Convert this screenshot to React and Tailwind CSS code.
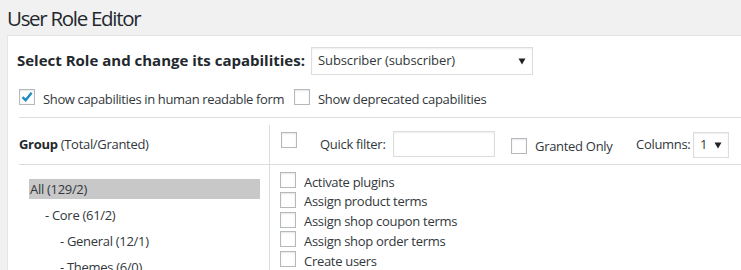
import React from 'react';

const font = { fontFamily: '"Open Sans", "Liberation Sans", sans-serif' };

const Checkbox = ({ checked = false, className = '' }) => (
    <span
        className={`flex h-[16px] w-[16px] shrink-0 items-center justify-center border border-[#b4b9be] bg-white shadow-[inset_0_1px_2px_rgba(0,0,0,0.1)] ${className}`}
    >
        {checked && (
            <svg width="14" height="14" viewBox="0 0 14 14">
                <path d="M2.5 7.2 L5.6 10.2 L11.6 2.8" fill="none" stroke="#1e8cbe" strokeWidth="2.4" />
            </svg>
        )}
    </span>
);

const Arrow = () => (
    <svg width="8" height="7" viewBox="0 0 8 7">
        <path d="M0.5 0.5 H7.5 L4 6.5 Z" fill="#222" />
    </svg>
);

const tree = [
    { label: 'All (129/2)', indent: 'pl-[1px]', active: true },
    { label: '- Core (61/2)', indent: 'pl-[16px]' },
    { label: '- General (12/1)', indent: 'pl-[31px]' },
    { label: '- Themes (6/0)', indent: 'pl-[31px]' },
];

const caps = [
    'Activate plugins',
    'Assign product terms',
    'Assign shop coupon terms',
    'Assign shop order terms',
    'Create users',
];

export default function App() {
    return (
        <div
            className="h-[270px] w-[741px] overflow-hidden bg-[#f1f1f1] text-[13px] tracking-[-0.3px] text-[#32373c]"
            style={font}
        >
            {/* Title */}
            <h1 className="h-[35px] pl-[7px] pt-[5px] text-[20.5px] leading-[27px] tracking-[-1.3px] text-[#23282d]">
                User Role Editor
            </h1>

            {/* Panel */}
            <div className="ml-[7px] h-[235px] border-l border-t border-[#e5e5e5] bg-white">
                {/* Role select row */}
                <div className="flex items-center pl-[9px] pt-[11px]">
                    <span className="mb-[3px] w-[294px] shrink-0 whitespace-nowrap text-[15px] font-bold leading-[20px] tracking-[0px] text-[#23282d]">
                        Select Role and change its capabilities:
                    </span>
                    <div className="flex h-[28px] w-[222px] items-center justify-between border border-[#ddd] bg-white pl-[6px] pr-[6px] shadow-[inset_0_1px_2px_rgba(0,0,0,0.07)]">
                        <span className="tracking-[-0.1px] text-[#32373c]">Subscriber (subscriber)</span>
                        <Arrow />
                    </div>
                </div>

                {/* Options row */}
                <div className="mt-[14px] flex h-[16px] items-center pl-[11px]">
                    <Checkbox checked />
                    <span className="ml-[8px] mt-[3px] w-[251px] shrink-0 whitespace-nowrap leading-[16px] tracking-[-0.35px]">
                        Show capabilities in human readable form
                    </span>
                    <Checkbox />
                    <span className="ml-[8px] mt-[3px] whitespace-nowrap leading-[16px]">Show deprecated capabilities</span>
                </div>

                {/* Editor table */}
                <div className="ml-[11px] mt-[12px] border-t border-[#ddd] pt-[7px]">
                    <div className="flex">
                        {/* Groups */}
                        <div className="h-[200px] w-[251px] shrink-0 border-r border-[#ddd]">
                            <div className="flex h-[40px] items-center border-b border-[#ddd]">
                                <span className="mt-[1px]">
                                    <b className="font-bold text-[#23282d]">Group</b> (Total/Granted)
                                </span>
                            </div>
                            <ul className="flex flex-col gap-[6px] pl-[10px] pr-[9px] pt-[14px]">
                                {tree.map((t) => (
                                    <li
                                        key={t.label}
                                        className={`h-[20px] leading-[20px] ${t.indent} ${t.active ? 'bg-[#c8c8c8]' : ''}`}
                                    >
                                        {t.label}
                                    </li>
                                ))}
                            </ul>
                        </div>

                        {/* Capabilities */}
                        <div className="flex-1">
                            <div className="flex h-[40px] border-b border-[#ddd] pl-[11px]">
                                <Checkbox className="mt-[7px]" />
                                <span className="ml-[23px] w-[73px] shrink-0 self-center whitespace-nowrap">Quick filter:</span>
                                <span className="mt-[6px] h-[26px] w-[102px] shrink-0 border border-[#ddd] bg-white shadow-[inset_0_1px_2px_rgba(0,0,0,0.07)]" />
                                <Checkbox className="ml-[16px] mt-[13px]" />
                                <span className="ml-[8px] mt-[5px] w-[101px] shrink-0 self-center whitespace-nowrap">Granted Only</span>
                                <span className="w-[57px] shrink-0 self-center whitespace-nowrap">Columns:</span>
                                <div className="mt-[7px] flex h-[26px] w-[36px] shrink-0 items-center justify-between border border-[#ddd] bg-white pl-[6px] pr-[6px] shadow-[inset_0_1px_2px_rgba(0,0,0,0.07)]">
                                    <span>1</span>
                                    <Arrow />
                                </div>
                            </div>
                            <ul className="pl-[10px] pt-[7px]">
                                {caps.map((c) => (
                                    <li key={c} className="flex h-[19.75px] items-start">
                                        <Checkbox />
                                        <span className="ml-[8px] mt-[0.5px] whitespace-nowrap leading-[19px]">{c}</span>
                                    </li>
                                ))}
                            </ul>
                        </div>
                    </div>
                </div>
            </div>
        </div>
    );
}
